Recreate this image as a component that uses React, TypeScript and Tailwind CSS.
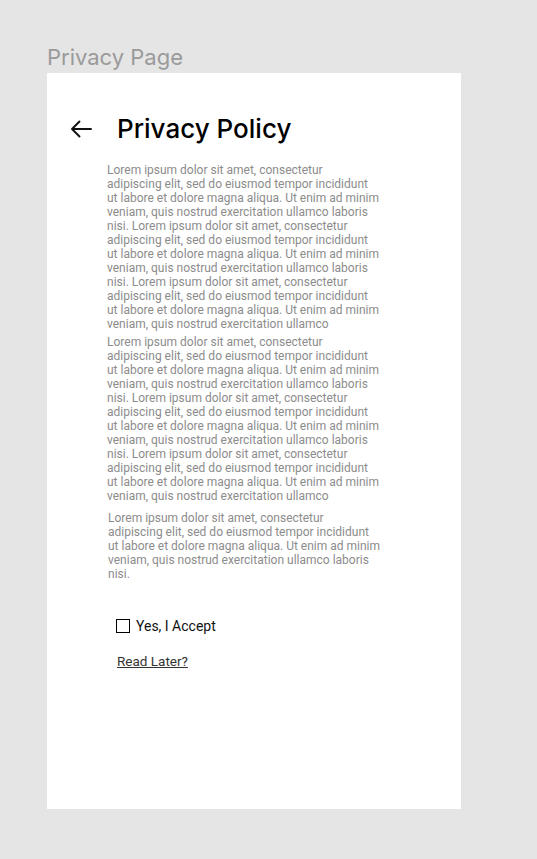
import React from "react";

const BLOCK = [
  "Lorem ipsum dolor sit amet, consectetur",
  "adipiscing elit, sed do eiusmod tempor incididunt",
  "ut labore et dolore magna aliqua. Ut enim ad minim",
  "veniam, quis nostrud exercitation ullamco laboris",
  "nisi. Lorem ipsum dolor sit amet, consectetur",
  "adipiscing elit, sed do eiusmod tempor incididunt",
  "ut labore et dolore magna aliqua. Ut enim ad minim",
  "veniam, quis nostrud exercitation ullamco laboris",
  "nisi. Lorem ipsum dolor sit amet, consectetur",
  "adipiscing elit, sed do eiusmod tempor incididunt",
  "ut labore et dolore magna aliqua. Ut enim ad minim",
  "veniam, quis nostrud exercitation ullamco",
];
const SHORT = [
  "Lorem ipsum dolor sit amet, consectetur",
  "adipiscing elit, sed do eiusmod tempor incididunt",
  "ut labore et dolore magna aliqua. Ut enim ad minim",
  "veniam, quis nostrud exercitation ullamco laboris",
  "nisi.",
];

function Para({ lines, className }: { lines: string[]; className?: string }) {
  return (
    <p className={className}>
      {lines.map((l, i) => (
        <span key={i} className="block whitespace-nowrap">
          {l}
        </span>
      ))}
    </p>
  );
}

export default function App() {
  return (
    <div className="min-h-[859px] w-[537px] bg-[#e5e5e5] pl-[47px] pt-[44px]">
      <div className="font-['Inter',sans-serif] text-[22px] leading-[26px] text-[#9a9a9a]">
        Privacy Page
      </div>
      <div className="mt-[3px] flex h-[736px] w-[414px] flex-col bg-white">
        <div className="flex items-center pl-[23px] pt-[38px]">
          <svg width="22" height="18" viewBox="0 0 22 18" fill="none" className="shrink-0">
            <path d="M21 9H2M9.5 1.5L2 9l7.5 7.5" stroke="#111" strokeWidth="1.9" strokeLinecap="round" strokeLinejoin="round" />
          </svg>
          <h1 className="ml-[25px] font-['Inter',sans-serif] text-[26px] font-medium leading-[36px] text-black">
            Privacy Policy
          </h1>
        </div>
        <div className="mt-[16px] flex flex-col pl-[60px] font-['Roboto',sans-serif] text-[12px] leading-[14px] text-[#8c8c8c]">
          <Para lines={BLOCK} />
          <Para lines={BLOCK} className="mt-[4px]" />
          <Para lines={SHORT} className="mt-[8px] pl-px" />
        </div>
        <label className="ml-[69px] mt-[36px] flex items-center gap-[6px] font-['Roboto',sans-serif] text-[14px] leading-[18px] text-[#111]">
          <span className="h-[14px] w-[14px] border-[1.5px] border-black" />
          <span>Yes, I Accept</span>
        </label>
        <a className="ml-[70px] mt-[18px] w-fit font-['Roboto',sans-serif] text-[13.5px] leading-[16px] text-[#333] underline">
          Read Later?
        </a>
      </div>
    </div>
  );
}
